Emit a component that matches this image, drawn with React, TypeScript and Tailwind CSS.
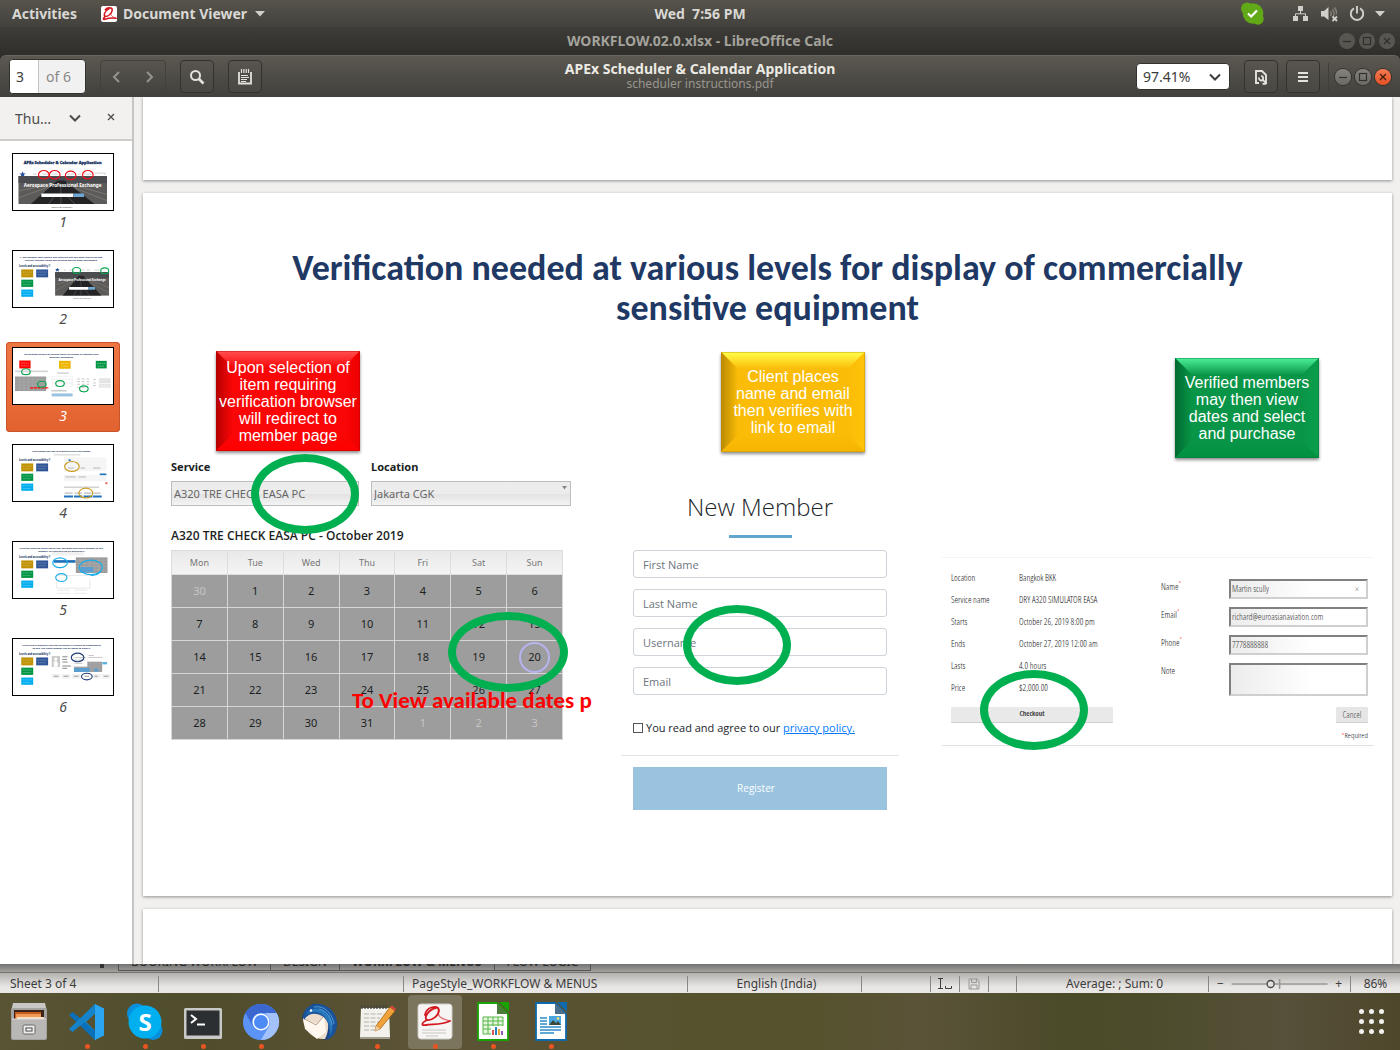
import React from "react";

type Tone = "red" | "amber" | "green";

const UI = "font-['Noto_Sans',sans-serif]";
const SEGOE = "font-['Open_Sans',sans-serif]";

/* ---------- small glyphs ---------- */

function Swirl({ className }: { className?: string }) {
  return (
    <svg className={className} viewBox="0 0 34 34" fill="none" stroke="#d4171e" strokeLinecap="round">
      <path d="M9 8C13 2 25 2 24 9C23 16 14 23 9 22C4 19 9 10 17 6" strokeWidth="3" />
      <path d="M9 22C5 26 3 30 8 28C15 26 23 25 32 26" strokeWidth="3.200" />
      <path d="M23 8C25 14 18 17 23 21C26 24 29 25 32 26" strokeWidth="2" opacity=".7" />
    </svg>
  );
}

function Chevron({ dir, className }: { dir: "left" | "right" | "down"; className?: string }) {
  const d = { left: "M10 3L5 8L10 13", right: "M6 3L11 8L6 13", down: "M3 5.500L8 10.500L13 5.500" }[dir];
  return (
    <svg className={className} width="16" height="16" viewBox="0 0 16 16" fill="none" stroke="currentColor" strokeWidth="2">
      <path d={d} />
    </svg>
  );
}

function WindowDot({ kind, look }: { kind: "min" | "max" | "close"; look: "dim" | "lit" | "orange" }) {
  const skin = {
    dim: "bg-[#575650] text-[#2f2e2b]",
    lit: "bg-gradient-to-b from-[#85837c] to-[#6b6963] text-[#33322f] shadow-[0_0_0_1px_#33322e]",
    orange: "bg-gradient-to-b from-[#f57b53] to-[#e24f20] text-[#3c1a0e] shadow-[0_0_0_1px_#33322e]",
  }[look];
  return (
    <button type="button" aria-label={kind} className={`flex size-4 items-center justify-center rounded-full ${skin}`}>
      <svg width="16" height="16" viewBox="0 0 16 16" fill="none" stroke="currentColor" strokeWidth="1.2">
        {kind === "min" && <path d="M4 8.500H12" />}
        {kind === "max" && <rect x="4.500" y="4.500" width="7" height="7" />}
        {kind === "close" && <path d="M5 5L11 11M11 5L5 11" />}
      </svg>
    </button>
  );
}

/* ---------- top chrome ---------- */

function SystemBar() {
  return (
    <header className="grid h-[27px] shrink-0 grid-cols-[1fr_auto_1fr] items-center bg-gradient-to-b from-[#57544c] to-[#42413c] text-[14px] font-bold text-[#d9d8d4]">
      <div className="flex items-center pl-3">
        <button type="button">Activities</button>
        <button type="button" className="ml-6 flex items-center">
          <span className="mr-[6px] block size-4 rounded-[2px] bg-white">
            <Swirl className="size-4" />
          </span>
          Document Viewer
          <svg className="ml-2" width="10" height="6" viewBox="0 0 10 6" fill="#d0cfca"><path d="M0 0H10L5 5.500Z" /></svg>
        </button>
      </div>
      <span className="whitespace-pre">Wed  7:56 PM</span>
      <div className="flex items-center justify-end pr-[15px]">
        <svg className="mr-7" width="23" height="23" viewBox="0 0 23 23">
          <circle cx="12" cy="11.500" r="10.300" fill="#62a918" />
          <circle cx="6" cy="6.500" r="6" fill="#62a918" />
          <circle cx="17" cy="17" r="5.700" fill="#62a918" />
          <path d="M7 11.500L10.200 14.500L16 8.500" stroke="#fff" strokeWidth="2.300" fill="none" />
        </svg>
        <svg className="mr-3" width="17" height="16" viewBox="0 0 17 16" fill="#d0cfca">
          <path d="M6 0h5v5H6zM1 10h5v5H1zM11 10h5v5h-5z" />
          <path d="M8.500 5v3M3.500 10.500V7.800h10v2.700" stroke="#d0cfca" fill="none" />
        </svg>
        <svg className="mr-[11px]" width="17" height="16" viewBox="0 0 17 16">
          <path d="M0 5h3l4.500-4v13L3 10.500H0z" fill="#d0cfca" />
          <path d="M9.500 5q1.500 2.500 0 5M11.500 3q3 4.500 0 9M13.500 1.500q3 4 1.500 7" stroke="#807e76" strokeWidth="1.500" fill="none" />
          <path d="M11.500 10.500l4.500 4.500M16 10.500L11.500 15" stroke="#d0cfca" strokeWidth="1.800" />
        </svg>
        <svg className="mr-[10px]" width="16" height="16" viewBox="0 0 16 16" fill="none" stroke="#d0cfca" strokeWidth="1.900">
          <path d="M5 2.300A6.200 6.200 0 1 0 11 2.300M8 0V7.500" />
        </svg>
        <svg width="10" height="6" viewBox="0 0 10 6" fill="#d0cfca"><path d="M0 0H10L5 5.500Z" /></svg>
      </div>
    </header>
  );
}

function BackWindowBar() {
  return (
    <div className="grid h-7 shrink-0 grid-cols-[1fr_auto_1fr] items-center bg-gradient-to-b from-[#3d3c38] to-[#2f2e2b] text-[14px] font-bold text-[#a3a29b]">
      <span />
      <span className="pb-[2px]">WORKFLOW.02.0.xlsx - LibreOffice Calc</span>
      <div className="flex justify-end gap-1 pr-[5px]">
        <WindowDot kind="min" look="dim" />
        <WindowDot kind="max" look="dim" />
        <WindowDot kind="close" look="dim" />
      </div>
    </div>
  );
}

const toolBtn =
  "flex h-[33px] w-[34px] items-center justify-center rounded-[4px] border border-[#33322e] bg-gradient-to-b from-[#57554e] to-[#484741] text-[#e4e2dc]";

function Toolbar() {
  return (
    <div className="grid h-[42px] shrink-0 grid-cols-[1fr_auto_1fr] items-center rounded-t-[6px] border-t border-[#69675f] bg-gradient-to-b from-[#5a5850] to-[#42403c]">
      <div className="flex items-center pl-[9px]">
        <div className="flex h-[35px] w-[77px] overflow-hidden rounded-[4px] border border-[#33322e] bg-[#f1f1f1] text-[14px] text-[#888]">
          <input aria-label="Page" defaultValue="3" className="w-[29px] border-r border-[#c4c4c4] bg-white pl-[6px] text-[#3c3c3c] outline-none" />
          <span className="self-center pl-[7px]">of 6</span>
        </div>
        <div className="ml-[14px] flex h-[33px] w-[66px] items-center justify-between rounded-[4px] border border-[#42413b] px-2 text-[#96948c]">
          <button type="button" aria-label="Previous page"><Chevron dir="left" /></button>
          <button type="button" aria-label="Next page"><Chevron dir="right" /></button>
        </div>
        <button type="button" aria-label="Find" className={`ml-[14px] ${toolBtn}`}>
          <svg width="16" height="16" viewBox="0 0 16 16" fill="none" stroke="currentColor">
            <circle cx="6.500" cy="6.500" r="4.500" strokeWidth="2" />
            <path d="M10 10l4.500 4.500" strokeWidth="2.600" />
          </svg>
        </button>
        <button type="button" aria-label="Annotate" className={`ml-[14px] ${toolBtn}`}>
          <svg width="14" height="16" viewBox="0 0 14 16" fill="none" stroke="currentColor">
            <path d="M1 3v11.500h12V3" strokeWidth="1.800" />
            <path d="M3.500 0v4M5.900 0v4M8.200 0v4M10.500 0v4" strokeWidth="1.200" />
            <path d="M3 6.500h7M3 8.500h8M3 10.500h6M3 12.500h5" strokeWidth="1.100" />
          </svg>
        </button>
      </div>
      <div className="pb-px text-center">
        <h1 className="text-[14px] leading-4 font-bold text-[#eceae4]">APEx Scheduler &amp; Calendar Application</h1>
        <p className="text-[12px] leading-[14px] text-[#98968e]">scheduler instructions.pdf</p>
      </div>
      <div className="flex items-center justify-end pr-[9px]">
        <label className="relative flex h-[27px] w-[94px] items-center rounded-[4px] border border-[#33322e] bg-white text-[14px] text-[#3c3c3c]">
          <select aria-label="Zoom" className="w-full appearance-none bg-transparent pl-[6px] outline-none">
            <option>97.41%</option>
          </select>
          <Chevron dir="down" className="pointer-events-none absolute right-[6px]" />
        </label>
        <button type="button" aria-label="Page settings" className={`ml-[14px] ${toolBtn}`}>
          <svg width="14" height="16" viewBox="0 0 14 16" fill="none" stroke="currentColor" strokeWidth="1.900">
            <path d="M5 14H2V2h6l4 4v8" />
            <path d="M8.500 14.800l3.500 0" />
            <path d="M5 8.500a2.200 2.200 0 0 0 3.600 2.300M7.200 7a2.200 2.200 0 0 1 1.500 3.600l4 4.400" strokeWidth="1.800" />
          </svg>
        </button>
        <button type="button" aria-label="Menu" className={`ml-2 ${toolBtn}`}>
          <svg width="12" height="12" viewBox="0 0 12 12" stroke="currentColor" strokeWidth="2"><path d="M1 2h10M1 6h10M1 10h10" /></svg>
        </button>
        <span className="mr-[6px] ml-2 h-7 w-px bg-[#3f3e39]" />
        <div className="flex gap-1">
          <WindowDot kind="min" look="lit" />
          <WindowDot kind="max" look="lit" />
          <WindowDot kind="close" look="orange" />
        </div>
      </div>
    </div>
  );
}

/* ---------- thumbnails ---------- */

function Boxes() {
  return (
    <g>
      <text x="20" y="50" fontSize="7.500" fontWeight="800" fill="#1f3864">Levels and accessibility !!</text>
      <rect x="27" y="58" width="36" height="24" fill="#bf9000" />
      <rect x="72" y="58" width="36" height="24" fill="#2f5597" />
      <rect x="27" y="89" width="36" height="22" fill="#009644" />
      <rect x="27" y="119" width="36" height="22" fill="#00aeef" />
      <path d="M31 66h28M33 74h24M76 66h28M78 74h24M31 96h28M33 104h24M31 126h28M33 134h24" stroke="#fff" strokeWidth="2" strokeDasharray="4 2" opacity=".5" />
    </g>
  );
}

function Head({ a, b }: { a: string; b?: string }) {
  return (
    <text fontSize="7" fontWeight="800" fill="#1f3864" textAnchor="middle">
      <tspan x="148" y="23">{a}</tspan>
      {b && <tspan x="148" y="31">{b}</tspan>}
    </text>
  );
}

function Runway({ x, y, w, h }: { x: number; y: number; w: number; h: number }) {
  return (
    <svg x={x} y={y} width={w} height={h} viewBox="0 0 100 32" preserveAspectRatio="none">
      <rect width="100" height="32" fill="#5d5b59" />
      <path d="M0 0h100v8H0z" fill="#4a4c50" />
      <path d="M44 5h8l34 27H14z" fill="#242426" />
      <path d="M0 17l40-8M0 25l38-14M58 9l42 12M64 14l36 14" stroke="#85817c" strokeWidth=".8" />
      <path d="M48 8v24M40 24l-6 8M56 24l8 8" stroke="#888" strokeWidth=".5" />
      <text x="50" y="12" fontSize="5.300" fontWeight="700" fill="#fff" textAnchor="middle">Aerospace Professional Exchange</text>
      <path d="M26 20h36v4H26z" fill="#fff" />
      <path d="M62 20h12v4H62z" fill="#6fa8d3" />
    </svg>
  );
}

function MiniCal({ x, y, w, h }: { x: number; y: number; w: number; h: number }) {
  return (
    <svg x={x} y={y} width={w} height={h} viewBox="0 0 70 40" preserveAspectRatio="none">
      <rect width="70" height="40" fill="#9c9c9c" />
      <path d="M0 8h70M0 16h70M0 24h70M0 32h70M10 0v40M20 0v40M30 0v40M40 0v40M50 0v40M60 0v40" stroke="#bbb" strokeWidth=".7" />
    </svg>
  );
}

const ring = { fill: "none", strokeWidth: 3.5 };

const thumbArt: React.ReactNode[] = [
  <>
    <text x="152" y="31" fontSize="12" fontWeight="800" fill="#1f3864" stroke="#1f3864" textAnchor="middle">APEx Scheduler &amp; Calendar Application</text>
    <path d="M31 55l3 6h7l-6 4 2 7-6-4-6 4 2-7-6-4h7z" fill="#1f4e9b" />
    <path d="M62 63h12M90 63h20M120 63h16M164 63h22M198 63h10M216 63h24M250 60h30v6" stroke="#bbb" strokeWidth="2" fill="none" />
    <Runway x={18} y={69} w={268} h={85} />
    <text x="150" y="167" fontSize="7" fill="#444" textAnchor="middle">Search By Category</text>
    {[95, 128, 176, 228].map((cx, i) => <ellipse key={cx} cx={cx} cy={i === 2 ? 67 : 65} rx="16" ry="13" stroke="#f0101b" {...ring} />)}
  </>,
  <>
    <Head a="1. Any member may require any interface but you must reserve by slot," b="specific calendar items and sections may be open and booked." />
    <Boxes />
    <path d="M136 53l2 4h5l-4 3 2 5-5-3-5 3 2-5-4-3h5z" fill="#1f4e9b" />
    <path d="M156 60h6M172 60h8M208 60h10M225 60h10M248 60h14" stroke="#bbb" strokeWidth="2" />
    <Runway x={129} y={66} w={163} h={72} />
    <text x="211" y="147" fontSize="6" fill="#666" textAnchor="middle">Search By Category</text>
    <ellipse cx="194" cy="61" rx="12" ry="9" stroke="#0ba651" {...ring} />
    <ellipse cx="279" cy="62" rx="12" ry="9" stroke="#0ba651" {...ring} />
  </>,
  <>
    <Head a="Verification needed at various levels for display of commercially" b="sensitive equipment" />
    <rect x="21" y="40" width="34" height="24" fill="#f00" />
    <rect x="141" y="41" width="35" height="24" fill="#eeb500" />
    <rect x="252" y="41" width="33" height="23" fill="#009644" />
    <path d="M26 48h24M26 56h24M146 49h25M148 57h20M256 49h25M258 57h20" stroke="#fff" strokeWidth="2" strokeDasharray="5 2" opacity=".6" />
    <path d="M8 73h50M57 73h50" stroke="#d5d5d5" strokeWidth="5" />
    <MiniCal x={8} y={88} w={95} h={45} />
    <path d="M54 123h56" stroke="#f00" strokeWidth="4" strokeDasharray="9 2" />
    <path d="M135 78h35" stroke="#999" strokeWidth="2" />
    <path d="M120 88h62v8h-62zM120 99h62v8h-62zM120 110h62v8h-62z" fill="none" stroke="#ddd" />
    <path d="M118 132h46" stroke="#888" strokeWidth="2" />
    <rect x="119" y="140" width="63" height="9" fill="#99c3df" />
    <path d="M196 96h40M196 104h42M196 112h42M196 122h32M244 98h12M244 108h12M244 116h12" stroke="#aaa" strokeWidth="2" strokeDasharray="8 6" />
    <path d="M263 95h32v5h-32zM263 103h32v5h-32zM263 113h32v8h-32z" fill="#eee" stroke="#bbb" />
    {[[41, 74], [89, 112], [144, 110], [216, 126]].map(([x, y]) => <ellipse key={x} cx={x} cy={y} rx="13" ry="9" stroke="#0ba651" {...ring} />)}
  </>,
  <>
    <Head a="Slide shows any end of flights to serve and choose" />
    <path d="M125 32h80" stroke="#bbb" strokeWidth="2" />
    <Boxes />
    <path d="M156 40h128v42H156zM156 92h128v20H156z" fill="#f5f5f5" />
    <path d="M170 48h6" stroke="#2273bd" strokeWidth="5" />
    <path d="M168 72h18M206 72h14M244 72h22M160 99h32M200 99h22M156 130h106" stroke="#999" strokeWidth="2" />
    <path d="M264 91h20" stroke="#2273bd" strokeWidth="5" />
    <path d="M156 158h27M186 158h25M215 158h26M243 158h27" stroke="#2273bd" strokeWidth="6" />
    <path d="M158 148h24M188 148h22M217 148h22M245 148h22" stroke="#aaa" strokeWidth="3" />
    <rect x="281" y="115" width="6" height="6" fill="#e05a4e" />
    <ellipse cx="180" cy="67" rx="22" ry="15" stroke="#c99a1c" {...ring} />
    <ellipse cx="222" cy="148" rx="21" ry="15" stroke="#c99a1c" {...ring} />
  </>,
  <>
    <Head a="Click the required flying ability tab, you must give every member to the" b="member, all reserved can be displayed !!" />
    <Boxes />
    <path d="M119 32h97v11h-97z" fill="#f1f1f1" />
    <path d="M125 57h66v8h-66z" fill="#1f6fb8" />
    <MiniCal x={191} y={48} w={97} h={48} />
    <path d="M205 78h40v16h-40z" fill="#5b9fd0" />
    <path d="M134 104h100M134 116v26h100v-26M134 148h40M186 148h40M134 158h40M186 158h40" stroke="#ddd" fill="none" strokeWidth="2" />
    <ellipse cx="144" cy="65" rx="22" ry="15" stroke="#18ade8" {...ring} />
    <ellipse cx="148" cy="110" rx="17" ry="12" stroke="#18ade8" {...ring} />
    <ellipse cx="237" cy="79" rx="35" ry="22" stroke="#18ade8" {...ring} />
    <path d="M236 103q20 2 30-10" stroke="#18ade8" {...ring} />
  </>,
  <>
    <Head a="A third party manager sells the necessary if request to complement" b="to end. The guest number can be above to email !!" />
    <Boxes />
    <rect x="119" y="54" width="25" height="33" fill="#c9c9c9" />
    <path d="M125 86V72q6-6 12 0v14M131 68a5 5 0 1 1 .1 0" fill="#fff" />
    <path d="M151 56h16M151 64h14M151 72h16M151 84h26M151 91h14" stroke="#888" strokeWidth="3" />
    <MiniCal x={186} y={70} w={86} h={32} />
    <path d="M186 90h48v12h-48zM246 92h14v9h-14z" fill="#5b9fd0" />
    <path d="M272 72h14v7h-14z" fill="#5bb0e0" />
    <rect x="184" y="50" width="42" height="36" fill="#fff" stroke="#ddd" />
    <path d="M188 58h34M188 66h30M188 76h24M230 52h16M230 58h42" stroke="#aaa" strokeWidth="2" />
    <path d="M119 108h26v14h-26zM149 108h26v14h-26zM180 108h26v14h-26zM241 108h26v14h-26zM270 108h26v14h-26z" fill="#f1f1f1" />
    <path d="M125 115h14M155 115h14M186 115h14M218 115h14M248 115h10M276 115h14" stroke="#999" strokeWidth="3" />
    <ellipse cx="197" cy="58" rx="19" ry="13" stroke="#1f3c78" {...ring} />
    <ellipse cx="225" cy="116" rx="16" ry="10" stroke="#1f3c78" {...ring} />
  </>,
];

function Sidebar() {
  return (
    <aside className="flex w-[134px] shrink-0 flex-col border-r-2 border-[#c8c6c4] bg-white">
      <div className="flex h-[44px] shrink-0 items-center border-b-2 border-[#cfcdcb] bg-[#f2f1f0] pl-[15px] text-[14px] text-[#4c4c4c]">
        <span>Thu…</span>
        <button type="button" aria-label="Sidebar view" className="ml-4"><Chevron dir="down" /></button>
        <button type="button" aria-label="Close sidebar" className="ml-5">
          <svg width="16" height="16" viewBox="0 0 16 16" stroke="#4c4c4c" strokeWidth="1.300"><path d="M5 4L11 10M11 4L5 10" /></svg>
        </button>
      </div>
      <nav className="flex flex-col gap-[7px] pt-[7px] pl-[6px]">
        {thumbArt.map((art, i) => (
          <button
            key={i}
            type="button"
            className={`flex h-[90px] w-[114px] flex-col items-center rounded-[4px] pt-[5px] text-[14px] leading-[22px] ${
              i === 2
                ? "bg-gradient-to-b from-[#ee7744] to-[#e2622f] text-white shadow-[inset_0_0_0_1px_#c9552a]"
                : "text-[#4c4c4c]"
            }`}
          >
            <svg className="h-[58px] w-[102px] shrink-0 border border-black bg-white" viewBox="2 2 302 170" preserveAspectRatio="none">
              {art}
            </svg>
            <span className="italic">{i + 1}</span>
          </button>
        ))}
      </nav>
    </aside>
  );
}

/* ---------- slide ---------- */

const tones: Record<Tone, { base: string; top: string; left: string; right: string; bottom: string }> = {
  red: { base: "#fb0606", top: "#ff5050", left: "#b50000", right: "#ee0000", bottom: "#ff0000" },
  amber: { base: "#fbbc08", top: "#ffff4a", left: "#b98a00", right: "#ffc408", bottom: "#f5b400" },
  green: { base: "#099548", top: "#4df09a", left: "#006b30", right: "#0a9f4d", bottom: "#009040" },
};

function Bevel({ tone, className, children }: { tone: Tone; className: string; children: React.ReactNode }) {
  const t = tones[tone];
  const fade = (id: string, c: string, v: [number, number, number, number]) => (
    <linearGradient id={`${tone}-${id}`} x1={v[0]} y1={v[1]} x2={v[2]} y2={v[3]}>
      <stop offset="0" stopColor={c} />
      <stop offset="1" stopColor={t.base} />
    </linearGradient>
  );
  return (
    <div className={`relative flex h-[100px] w-36 items-center justify-center text-center font-['Liberation_Sans',sans-serif] text-[16px] leading-[17px] whitespace-nowrap text-white shadow-[0_2px_3px_rgba(0,0,0,0.45)] ${className}`}>
      <svg className="absolute inset-0 size-full" viewBox="0 0 144 100" preserveAspectRatio="none">
        <defs>
          {fade("t", t.top, [0, 0, 0, 1])}
          {fade("l", t.left, [0, 0, 1, 0])}
          {fade("r", t.right, [1, 0, 0, 0])}
          {fade("b", t.bottom, [0, 1, 0, 0])}
        </defs>
        <rect width="144" height="100" fill={t.base} />
        <path d="M0 0H144L127 17H17Z" fill={`url(#${tone}-t)`} />
        <path d="M0 0L17 17V83L0 100Z" fill={`url(#${tone}-l)`} />
        <path d="M144 0L127 17V83L144 100Z" fill={`url(#${tone}-r)`} />
        <path d="M0 100L17 83H127L144 100Z" fill={`url(#${tone}-b)`} />
        <rect x=".5" y=".5" width="143" height="99" fill="none" stroke={t.left} opacity=".4" />
      </svg>
      <p className="relative">{children}</p>
    </div>
  );
}

function Ring({ className }: { className: string }) {
  return <span className={`pointer-events-none absolute h-20 rounded-[50%] border-8 border-[#00b050] ${className}`} />;
}

const weeks = [
  [30, 1, 2, 3, 4, 5, 6],
  [7, 8, 9, 10, 11, 12, 13],
  [14, 15, 16, 17, 18, 19, 20],
  [21, 22, 23, 24, 25, 26, 27],
  [28, 29, 30, 31, 1, 2, 3],
];

const flatSelect =
  "mt-[6px] block h-[25px] w-full appearance-none border border-[#bdbdbd] bg-gradient-to-b from-[#ececec] from-50% via-[#e2e2e2] via-50% to-[#f3f3f3] pl-[2px] text-[11px] font-normal text-[#666] outline-none";

function CalendarColumn() {
  return (
    <section className={`relative pt-[23px] text-[11px] text-[#1b1e22] ${UI}`}>
      <Bevel tone="red" className="ml-[45px]">
        Upon selection of<br />item requiring<br />verification browser<br />will redirect to<br />member page
      </Bevel>
      <div className="mt-2 flex gap-3">
        <label className="block w-[188px] leading-4 font-bold">
          Service
          <select className={flatSelect}><option>A320 TRE CHECK EASA PC</option></select>
        </label>
        <label className="relative block w-[200px] leading-4 font-bold">
          Location
          <select className={flatSelect}><option>Jakarta CGK</option></select>
          <svg className="absolute right-1 bottom-4" width="5" height="4" viewBox="0 0 5 4" fill="#888"><path d="M0 0h5L2.500 3.500z" /></svg>
        </label>
      </div>
      <h3 className="mt-[22px] font-['Open_Sans',sans-serif] text-[12px] leading-4 font-semibold">A320 TRE CHECK EASA PC - October 2019</h3>
      <table className="mt-[6px] w-[392px] table-fixed border-collapse text-center">
        <thead>
          <tr className="h-[24px] bg-gradient-to-b from-[#e9e9e9] to-[#f4f4f4] text-[9px] text-[#777]">
            {["Mon", "Tue", "Wed", "Thu", "Fri", "Sat", "Sun"].map((d) => (
              <th key={d} className="border border-[#dcdcdc] p-0 font-normal">{d}</th>
            ))}
          </tr>
        </thead>
        <tbody>
          {weeks.map((w, r) => (
            <tr key={r} className="h-[33px] bg-[#9d9d9d]">
              {w.map((n, c) => {
                const outside = (r === 0 && c === 0) || (r === 4 && c > 3);
                return (
                  <td key={c} className={`border border-[#d6d6d6] p-0 ${outside ? "text-[#c6c6c6]" : ""}`}>
                    {n === 20 ? (
                      <span className="mx-auto flex size-[31px] items-center justify-center rounded-full border-2 border-[#b7b3ef]">20</span>
                    ) : n}
                  </td>
                );
              })}
            </tr>
          ))}
        </tbody>
      </table>
      <p className="absolute top-[358px] left-[181px] w-[240px] overflow-hidden font-['Carlito','Lato',sans-serif] text-[23px] leading-7 font-bold whitespace-nowrap text-[#f00]">
        To View available dates p
      </p>
      <Ring className="top-[126px] left-[80px] w-[108px]" />
      <Ring className="top-[284px] left-[277px] w-[120px]" />
    </section>
  );
}

function MemberColumn() {
  return (
    <section className={`relative pt-6 text-[11px] text-[#212529] ${SEGOE}`}>
      <Bevel tone="amber" className="ml-[100px]">
        Client places<br />name and email<br />then verifies with<br />link to email
      </Bevel>
      <h3 className="mt-[39px] text-center text-[24px] leading-8 font-light">New Member</h3>
      <div className="mx-auto mt-3 h-[3px] w-[63px] bg-[#62a5cf]" />
      <form className="mt-3" onSubmit={(e) => e.preventDefault()}>
        <div className="mx-3 flex flex-col gap-[11px]">
          {["First Name", "Last Name", "Username", "Email"].map((p) => (
            <input key={p} aria-label={p} placeholder={p} className="h-7 rounded-[3px] border border-[#ced4da] bg-white px-[9px] placeholder:text-[#6c757d]" />
          ))}
        </div>
        <div className="mx-3 mt-6 flex h-[18px] items-center gap-[3px]">
          <input id="agree" type="checkbox" className="size-[10px] appearance-none border border-[#555] bg-white" />
          <label htmlFor="agree">You read and agree to our <a href="#privacy" className="text-[#007bff] underline">privacy policy.</a></label>
        </div>
        <hr className="mt-[18px] border-[#e4e4e4]" />
        <div className="mx-3 mt-[11px]">
          <button type="submit" className="h-[43px] w-full bg-[#99c3df] pr-2 text-[10px] text-white">Register</button>
        </div>
      </form>
      <Ring className="top-[277px] left-[62px] w-[108px]" />
    </section>
  );
}

const sunk =
  "w-full border-2 border-t-[#808080] border-r-[#cfcfcf] border-b-[#cfcfcf] border-l-[#808080] bg-gradient-to-r from-[#ececec] to-white to-60% px-[1px] text-[#333] outline-none";

function CheckoutColumn() {
  const rows = [
    ["Location", "Bangkok BKK"],
    ["Service name", "DRY A320 SIMULATOR EASA"],
    ["Starts", "October 26, 2019 8:00 pm"],
    ["Ends", "October 27, 2019 12:00 am"],
    ["Lasts", "4.0 hours"],
    ["Price", "$2,000.00"],
  ];
  const fields = [
    ["Name", "Martin scully"],
    ["Email", "richard@euroasianaviation.com"],
    ["Phone", "7778888888"],
  ];
  return (
    <section className="relative pt-[30px]">
      <Bevel tone="green" className="ml-[240px]">
        Verified members<br />may then view<br />dates and select<br />and purchase
      </Bevel>
      <form
        onSubmit={(e) => e.preventDefault()}
        className="mt-[99px] ml-[7px] grid grid-cols-[210fr_207fr] border-t border-b border-t-[#f5f5f5] border-b-[#e2e2e2] pt-[9px] pr-[6px] pb-1 pl-[9px] font-['Open_Sans_Condensed_Light','Carlito',sans-serif] text-[9px] text-[#111]"
      >
        <div>
          <dl>
            {rows.map(([k, v]) => (
              <div key={k} className="flex leading-[22px]">
                <dt className="w-[68px]">{k}</dt>
                <dd>{v}</dd>
              </div>
            ))}
          </dl>
          <button type="submit" className="mt-2 h-4 w-[162px] rounded-[1px] border-b border-[#cfcfcf] bg-[#e9e9e9] font-['Open_Sans_Condensed','Carlito',sans-serif] text-[7px] font-bold text-[#444]">Checkout</button>
        </div>
        <div className="pt-3">
          <div className="flex flex-col gap-2">
            {fields.map(([k, v]) => (
              <div key={k} className="relative flex h-5">
                <label htmlFor={k} className="w-[68px] shrink-0 leading-4">{k}<sup className="text-[#f00]">*</sup></label>
                <input id={k} defaultValue={v} className={sunk} />
                {k === "Name" && <span className="absolute top-[3px] right-[9px] text-[10px] leading-[14px] text-[#888]">×</span>}
              </div>
            ))}
            <div className="flex h-[33px]">
              <label htmlFor="note" className="w-[68px] shrink-0 leading-4">Note</label>
              <textarea id="note" className={`resize-none ${sunk}`} />
            </div>
          </div>
          <div className="mt-[11px] flex flex-col items-end">
            <button type="button" className="h-4 w-8 rounded-[1px] border-b border-[#cfcfcf] bg-[#e6e6e6] text-[#444]">Cancel</button>
            <p className="mt-[6px] text-[8px] leading-3"><span className="text-[#f00]">*</span>Required</p>
          </div>
        </div>
      </form>
      <Ring className="top-[342px] left-[45px] w-[108px]" />
    </section>
  );
}

const sheetShadow = "bg-white shadow-[0_1px_3px_rgba(0,0,0,0.4)]";

function DocumentView() {
  return (
    <main className="flex min-w-0 flex-1 flex-col gap-[13px] overflow-hidden bg-[#f1f0ef] pr-2 pl-[9px]">
      <div className={`h-[83px] shrink-0 ${sheetShadow}`} />
      <article className={`min-h-[703px] shrink-0 pt-[55px] ${sheetShadow}`}>
        <h2 className="text-center font-['Carlito','Lato',sans-serif] text-[36px] leading-10 font-bold text-[#203864]">
          Verification needed at various levels for display of commercially<br />sensitive equipment
        </h2>
        <div className="grid grid-cols-[414fr_278fr_439fr] gap-9 pr-[18px] pl-7">
          <CalendarColumn />
          <MemberColumn />
          <CheckoutColumn />
        </div>
      </article>
      <div className={`flex-1 ${sheetShadow}`} />
    </main>
  );
}

/* ---------- spreadsheet strip ---------- */

function SheetTabs() {
  return (
    <div className="flex h-[9px] shrink-0 items-end overflow-hidden border-b border-[#777572] bg-gradient-to-b from-[#757472] to-[#a3a19e] text-[12px] leading-4 text-[#2a2a2a]">
      <div className="flex w-[118px] shrink-0 justify-end pr-[14px] pb-1"><span className="h-4 w-1 bg-[#333]" /></div>
      {["BOOKING WORKFLOW", "DESIGN", "WORKFLOW & MENUS", "FLOW LOGIC"].map((t, i) => (
        <button key={t} type="button" className={`mb-px border-r border-b border-[#555] px-3 ${i === 2 ? "font-bold" : ""} ${i === 0 ? "border-l" : ""}`}>{t}</button>
      ))}
    </div>
  );
}

function StatusBar() {
  const cell = "flex h-4 items-center justify-center border-r border-[#8a8885] whitespace-nowrap";
  return (
    <footer className="grid h-5 shrink-0 grid-cols-[159fr_245fr_284fr_174fr_69fr_29fr_29fr_28fr_192fr_142fr_49fr] items-center bg-gradient-to-b from-[#b3b1ae] to-[#e9e7e5] to-70% pt-px text-[12px] text-[#3c3c3c]">
      <span className={`${cell} justify-start! pl-[10px]`}>Sheet 3 of 4</span>
      <span className={cell} />
      <span className={`${cell} justify-start! pl-2`}>PageStyle_WORKFLOW &amp; MENUS</span>
      <span className={`${cell} pl-1`}>English (India)</span>
      <span className={cell} />
      <span className={cell}>
        <svg width="16" height="12" viewBox="0 0 16 12" fill="none" stroke="#3c3c3c"><path d="M1 .5h5M1 10.500h5M3.500 .5v10M8.500 8v2.500h6V8" /></svg>
      </span>
      <span className={cell}>
        <svg width="12" height="12" viewBox="0 0 12 12" fill="none" stroke="#999"><path d="M1 1h8l2 2v8H1zM3.500 1v3.500h5V1M3 11V7h6v4" /></svg>
      </span>
      <span className={cell} />
      <span className={`${cell} pl-1`}>Average: ; Sum: 0</span>
      <span className={`${cell} gap-1 px-2`}>
        <span aria-hidden="true">−</span>
        <svg className="h-3 min-w-0 flex-1" viewBox="0 0 100 12" fill="none">
          <path d="M2 6h96M50 1v10" stroke="#9a9895" strokeWidth="1.500" />
          <circle cx="41" cy="6" r="3.500" fill="#e3e1df" stroke="#444" strokeWidth="1.300" />
        </svg>
        <span aria-hidden="true">+</span>
      </span>
      <span className="text-center">86%</span>
    </footer>
  );
}

/* ---------- dock ---------- */

function OfficeDoc({ color, light, children }: { color: string; light: string; children: React.ReactNode }) {
  return (
    <>
      <path d="M12 8h19l11 11v26H12z" fill="#fff" stroke={color} strokeWidth="1.800" />
      <path d="M33 7h10v10z" fill={color} />
      <path d="M31 8v11h11z" fill={light} />
      {children}
    </>
  );
}

const dock: { name: string; running: boolean; art: React.ReactNode }[] = [
  {
    name: "Files", running: false,
    art: (
      <>
        <path d="M11 8h32l2 9H9z" fill="#c9c7c5" />
        <rect x="9" y="13" width="36" height="32" rx="2" fill="#a5a3a1" />
        <rect x="12" y="15" width="30" height="9" fill="#3a2418" />
        <path d="M13 17h26v7H13z" fill="#c65a21" />
        <path d="M14 19h25v5H14z" fill="#f09a58" />
        <path d="M15 22h27v2H15z" fill="#fde0c4" />
        <rect x="10" y="24" width="34" height="20" rx="1" fill="#b9b7b5" />
        <path d="M10 24h34" stroke="#ddd" />
        <rect x="21" y="30" width="12" height="9" rx="1.500" fill="#ececec" stroke="#666" />
        <rect x="24" y="33" width="6" height="3" fill="#fff" stroke="#444" />
      </>
    ),
  },
  {
    name: "Visual Studio Code", running: true,
    art: (
      <>
        <path d="M35 9L18 27 35 45V35.500L26 27l9-8.500z" fill="#1c8ad6" />
        <path d="M9 20l3.500-3L38 38l-3 7z" fill="#0a70b8" />
        <path d="M9 34l3.500 3L38 16l-3-7z" fill="#1583ca" />
        <path d="M35 9l9 4.500v27L35 45z" fill="#2aa5f2" />
      </>
    ),
  },
  {
    name: "Skype", running: true,
    art: (
      <>
        <circle cx="19" cy="18.500" r="10" fill="#0a8fdc" />
        <circle cx="35" cy="35.500" r="9.500" fill="#0a8fdc" />
        <circle cx="27" cy="27" r="16.500" fill="#00aff0" />
        <text x="27" y="36" fontSize="24" fontWeight="700" fill="#fff" textAnchor="middle" fontFamily="Open Sans">S</text>
      </>
    ),
  },
  {
    name: "Terminal", running: true,
    art: (
      <>
        <rect x="8" y="13" width="38" height="31" rx="1.500" fill="#c8c8c6" />
        <rect x="10.500" y="15.500" width="33" height="25" fill="#2b2f31" />
        <path d="M15 20l5 4-5 4M21 29.500h8" stroke="#fff" strokeWidth="2" fill="none" />
      </>
    ),
  },
  {
    name: "Chromium", running: true,
    art: (
      <>
        <circle cx="27" cy="27" r="18" fill="#5b94f5" />
        <path d="M11.400 18A18 18 0 0 1 42.600 18H27a9 9 0 0 0-7.800 13.500z" fill="#3a67d0" />
        <path d="M42.600 18A18 18 0 0 1 27 45l7.800-13.500A9 9 0 0 0 34 21.500L31 18z" fill="#a3c2fb" />
        <circle cx="27" cy="27" r="8.500" fill="#fff" />
        <circle cx="27" cy="27" r="7" fill="#4c8bf5" />
      </>
    ),
  },
  {
    name: "Thunderbird", running: false,
    art: (
      <>
        <path d="M10 24C11 15 16 15 20 9C32 7 44 15 45 28C45 38 38 44 31 45C36 36 30 28 10 24z" fill="#1b4484" />
        <path d="M11 24c5-8 14-9 21-4 6 5 5 16 1 24-10 1-21-7-22-20z" fill="#ecdccb" />
        <path d="M11 23l14 6 7-8 2 16-9 7-12-10z" fill="#fff8f0" />
        <path d="M11 23l13 7 8-9" stroke="#b7a08c" fill="none" />
        <path d="M12 25C9 14 20 6 31 10C42 13 47 25 44 35C43 40 39 43 35 45C39 35 37 25 30 21C23 17 16 18 12 25z" fill="#1a539a" />
        <path d="M14 20C18 12 28 12 34 17C41 23 42 33 38 41C39 31 36 23 28 18C22 16 17 17 14 20z" fill="#2878bd" />
        <path d="M22 12c10-2 18 6 20 17M27 14c8 2 12 9 13 16" stroke="#4f9fd8" fill="none" />
        <circle cx="19" cy="15.500" r="1.200" fill="#fff" />
      </>
    ),
  },
  {
    name: "Text Editor", running: true,
    art: (
      <>
        <path d="M11 13h28l1 29H10z" fill="#f3f1ec" />
        <path d="M10 42h30v2H10z" fill="#a09c92" />
        <path d="M12 10v4M15 10v4M18 10v4M21 10v4M24 10v4M27 10v4M30 10v4M33 10v4M36 10v4" stroke="#444" strokeWidth="1.300" />
        <path d="M14 19h20M14 23h16M14 27h19M14 31h14M14 35h12" stroke="#b5b2ac" strokeDasharray="5 1.500" />
        <path d="M40 12l5 4-15 18-5 2 1-5z" fill="#f0a13a" stroke="#9a5c10" strokeWidth=".7" />
        <path d="M40 12l2-1.500 4 3.500-1 2z" fill="#d8453e" />
        <path d="M26 31l-1 5 5-2z" fill="#e9cfa2" />
      </>
    ),
  },
  {
    name: "Document Viewer", running: true,
    art: (
      <>
        <rect x="10" y="9" width="34" height="35" rx="3" fill="#f6f5f4" stroke="#cfcdca" />
        <g fill="none" stroke="#d4171e" strokeLinecap="round">
          <path d="M17 20C18 12 30 9 31 15C31 21 23 26 19 25C15 23 21 14 28 13" strokeWidth="1.800" />
          <path d="M19 25C13 28 13 31 18 30C26 29 34 30 42 26" strokeWidth="1.800" />
          <path d="M30 13C31 19 27 22 42 26" strokeWidth="1.200" opacity=".6" />
        </g>
        <path d="M14 35h24M14 38h24M18 41h12" stroke="#cac8c6" />
      </>
    ),
  },
  {
    name: "LibreOffice Calc", running: true,
    art: (
      <OfficeDoc color="#18a303" light="#4a7d3c">
        <path d="M17 22h20v17H17z" fill="#e4f7dc" stroke="#56b548" />
        <path d="M17 26h20M17 30h20M17 34h20M22 22v17M27 22v17M32 22v17" stroke="#56b548" />
        <path d="M25 31h13v9H25z" fill="#fff" />
        <path d="M27 40v-5" stroke="#d9534f" strokeWidth="2" /><path d="M30 40v-8" stroke="#2b7fc0" strokeWidth="2" />
        <path d="M33 40v-6" stroke="#f0a13a" strokeWidth="2" /><path d="M36 40v-4" stroke="#8a5bb5" strokeWidth="2" />
      </OfficeDoc>
    ),
  },
  {
    name: "LibreOffice Writer", running: true,
    art: (
      <OfficeDoc color="#0f69ad" light="#48708c">
        <path d="M16 23h7M16 26h7M16 29h7M16 32h21M16 35h21M16 38h14" stroke="#2d8cc9" strokeWidth="1.400" />
        <rect x="25" y="21" width="12" height="9" fill="#49a7e0" />
        <path d="M25 30l4-5 3 3 2-2 3 4z" fill="#3c4a3c" />
        <circle cx="34" cy="23.500" r="1.300" fill="#ffe26a" />
      </OfficeDoc>
    ),
  },
];

function Dock() {
  return (
    <div className="flex h-[57px] shrink-0 items-center justify-between bg-[linear-gradient(90deg,#595434_0%,#4f4d2c_14%,#5c5336_30%,#57522f_45%,#56522d_58%,#5a5339_66%,#4b4a29_76%,#4c4c2c_82%,#57503a_92%,#4d472b_100%)] pr-4 pl-[2px]">
      <div className="flex gap-1">
        {dock.map((d) => (
          <button key={d.name} type="button" aria-label={d.name} className={`relative size-[54px] rounded-[4px] ${d.name === "Document Viewer" ? "bg-white/20" : ""}`}>
            <svg viewBox="0 0 54 54" className="size-full">{d.art}</svg>
            {d.running && <span className="absolute bottom-0 left-[25px] size-[5px] rounded-full bg-[#e95420]" />}
          </button>
        ))}
      </div>
      <button type="button" aria-label="Show applications" className="grid grid-cols-3 gap-[5px]">
        {Array.from({ length: 9 }, (_, i) => <span key={i} className="size-[5px] rounded-full bg-[#f2f1ee]" />)}
      </button>
    </div>
  );
}

export default function App() {
  return (
    <div className={`flex min-h-screen flex-col overflow-hidden bg-[#2f2e2b] ${UI}`}>
      <SystemBar />
      <BackWindowBar />
      <Toolbar />
      <div className="flex flex-1">
        <Sidebar />
        <DocumentView />
      </div>
      <SheetTabs />
      <StatusBar />
      <Dock />
    </div>
  );
}
